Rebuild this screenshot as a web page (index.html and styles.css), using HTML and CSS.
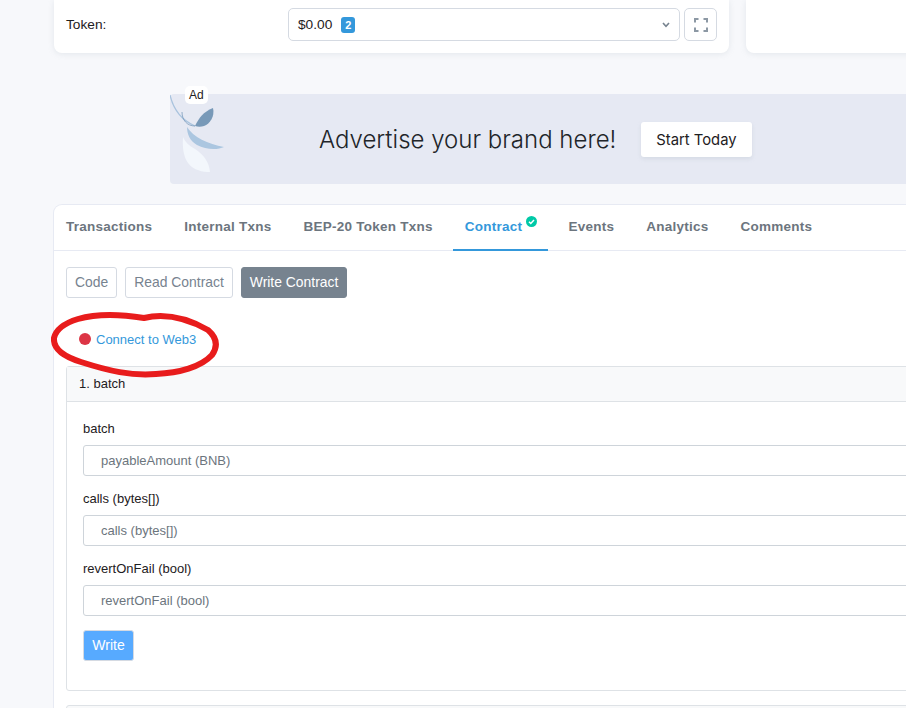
FILE: index.html
```html
<!DOCTYPE html>
<html lang="en">
<head>
    <meta charset="UTF-8">
    <meta name="viewport" content="width=device-width, initial-scale=1.0">
    <title>Write Contract</title>
    <link rel="stylesheet" href="styles.css">
</head>
<body>
    <div class="top-row">
        <div class="top-card">
            <span class="token-label">Token:</span>
            <div class="token-select">
                <span>$0.00</span>
                <span class="token-count">2</span>
                <svg class="caret" width="8" height="6" viewBox="0 0 8 6"><path d="M1 1l3 3.4L7 1" fill="none" stroke="#77838f" stroke-width="1.6"/></svg>
            </div>
            <div class="expand-btn">
                <svg width="14" height="14" viewBox="0 0 14 14"><path d="M1 4.500V1h3.500M9.500 1H13v3.500M13 9.500V13H9.500M4.500 13H1V9.500" fill="none" stroke="#8c98a4" stroke-width="2"/></svg>
            </div>
        </div>
        <div class="top-card side"></div>
    </div>

    <div class="ad">
        <span class="ad-tag">Ad</span>
        <svg class="ad-leaves" width="60" height="90" viewBox="0 0 60 90">
            <path d="M0 1C3 14 11 26 25 32" fill="none" stroke="#a9c3de" stroke-width="1.200"/>
            <path d="M12 18C12 26 17 32 25 32" fill="none" stroke="#7a9abb" stroke-width="0.800"/>
            <path d="M25 32C29 24 33 18 43 14C45 22 40 30 34 32C31 33 28 33 25 32Z" fill="#7899b8"/>
            <path d="M17 33C23 43 38 50 54 53C48 56 36 56 27 51C20 47 17 40 17 33Z" fill="#abc6e0"/>
            <path d="M13 43C12 58 15 72 28 76C32 78 37 78 40 78C39 68 34 61 25 55C19 52 15 48 13 43Z" fill="#f3f7fc"/>
        </svg>
        <span class="ad-text">Advertise your brand here!</span>
        <span class="ad-btn">Start Today</span>
    </div>

    <div class="card">
        <ul class="tabs">
            <li>Transactions</li>
            <li>Internal Txns</li>
            <li>BEP-20 Token Txns</li>
            <li class="active">Contract
                <svg class="check" width="11" height="11" viewBox="0 0 11 11"><circle cx="5.500" cy="5.500" r="5.500" fill="#00c9a7"/><path d="M3 5.700l1.800 1.800L8 4" fill="none" stroke="#fff" stroke-width="1.500"/></svg>
            </li>
            <li>Events</li>
            <li>Analytics</li>
            <li>Comments</li>
        </ul>
        <div class="card-body">
            <div class="sub-tabs">
                <span class="sub-btn">Code</span>
                <span class="sub-btn">Read Contract</span>
                <span class="sub-btn current">Write Contract</span>
            </div>
            <div class="connect">
                <span class="dot"></span>
                <a href="#">Connect to Web3</a>
                <svg class="scribble" width="180" height="76" viewBox="0 0 180 76">
                    <path d="M93 7C110 3 132 5 157 19C165 26 168 34 161 44C150 56 128 62 105 63C80 65 58 60 30 51C14 46 2 38 3 27C5 18 14 12 27 8C48 2 74 4 93 7Z" fill="none" stroke="#e81c1c" stroke-width="6" stroke-linecap="round"/>
                </svg>
            </div>
            <div class="panel">
                <div class="panel-head">1. batch</div>
                <div class="panel-body">
                    <label class="field-label">batch</label>
                    <input class="field" type="text" placeholder="payableAmount (BNB)">
                    <label class="field-label">calls (bytes[])</label>
                    <input class="field" type="text" placeholder="calls (bytes[])">
                    <label class="field-label">revertOnFail (bool)</label>
                    <input class="field" type="text" placeholder="revertOnFail (bool)">
                    <button class="write-btn">Write</button>
                </div>
            </div>
            <div class="panel next"></div>
        </div>
    </div>
</body>
</html>
```
FILE: styles.css
```css
*{
    margin: 0;
    padding: 0;
    box-sizing: border-box;
}
body{
    width: 906px;
    height: 708px;
    overflow: hidden;
    background-color: #f7f8fb;
    font-family: "Liberation Sans", Arial, sans-serif;
    font-size: 13px;
    color: #1e2022;
}
.top-row{
    display: flex;
    gap: 17px;
    margin-left: 54px;
    width: 1000px;
}
.top-card{
    display: flex;
    align-items: center;
    flex: none;
    width: 675px;
    height: 53px;
    padding: 8px 12px 12px 12px;
    font-size: 13.7px;
    background-color: white;
    border-radius: 0 0 8px 8px;
    box-shadow: 0 1px 6px #97a4af33;
}
.top-card.side{
    width: 300px;
}
.token-label{
    width: 222px;
}
.token-select{
    display: flex;
    align-items: center;
    width: 392px;
    height: 33px;
    padding: 0 9px;
    border: 1px solid #d5dae2;
    border-radius: 5px;
}
.token-count{
    margin-left: 9px;
    padding: 2px 4px;
    font-size: 11px;
    font-weight: bold;
    line-height: 12px;
    color: white;
    background-color: #3498db;
    border-radius: 3px;
}
.caret{
    margin-left: auto;
}
.expand-btn{
    display: flex;
    align-items: center;
    justify-content: center;
    width: 33px;
    height: 33px;
    margin-left: 4px;
    border: 1px solid #d5dae2;
    border-radius: 5px;
}
.ad{
    position: relative;
    display: flex;
    align-items: center;
    width: 900px;
    height: 90px;
    margin: 41px 0 0 170px;
    padding-left: 149px;
    background-color: #e6e9f3;
    border-radius: 4px;
}
.ad-tag{
    position: absolute;
    top: -8px;
    left: 15px;
    padding: 0 4px;
    height: 18px;
    font-size: 12px;
    line-height: 18px;
    background-color: white;
    border-radius: 5px;
}
.ad-leaves{
    position: absolute;
    top: 0;
    left: 0;
}
.ad-text{
    font-family: "Inter", sans-serif;
    font-size: 24px;
    font-weight: 300;
    color: #212529;
}
.ad-btn{
    margin-left: 25px;
    padding: 10px 15px 8px 15px;
    font-family: "Inter", sans-serif;
    font-size: 14.8px;
    line-height: 17px;
    background-color: white;
    border-radius: 3px;
    box-shadow: 0 2px 4px #97a4af33;
}
.card{
    width: 1000px;
    height: 600px;
    margin: 21px 0 0 54px;
    background-color: white;
    border-radius: 8px;
    box-shadow: 0 0 0 1px #e7eaf3;
}
.tabs{
    display: flex;
    height: 46px;
    list-style-type: none;
    border-bottom: 1px solid #e7eaf3;
}
.tabs > li{
    position: relative;
    padding: 14px 12px 0 12px;
    margin-right: 8px;
    font-size: 13.5px;
    font-weight: bold;
    letter-spacing: 0.25px;
    color: #6c757e;
    white-space: nowrap;
}
.tabs > li.active{
    height: 46px;
    padding-right: 26px;
    color: #3498db;
    border-bottom: 2px solid #3498db;
}
.check{
    position: absolute;
    top: 11px;
    right: 11px;
}
.card-body{
    padding: 16px 0 0 12px;
}
.sub-tabs{
    display: flex;
    gap: 8px;
}
.sub-btn{
    height: 31px;
    padding: 0 8px;
    font-size: 13.9px;
    line-height: 29px;
    color: #77838f;
    border: 1px solid #d5dae2;
    border-radius: 3px;
}
.sub-btn.current{
    color: white;
    background-color: #77838f;
    border-color: #77838f;
}
.connect{
    position: relative;
    display: flex;
    align-items: center;
    height: 68px;
    padding: 14px 0 0 13px;
    gap: 5px;
}
.connect a{
    color: #3498db;
    text-decoration: none;
}
.dot{
    width: 12px;
    height: 12px;
    background-color: #dc3545;
    border-radius: 50%;
}
.scribble{
    position: absolute;
    top: 13px;
    left: -15px;
}
.panel{
    width: 900px;
    height: 325px;
    border: 1px solid #dee2e6;
    border-radius: 3px;
}
.panel.next{
    height: 40px;
    margin-top: 14px;
    background-color: #f8f9fa;
}
.panel-head{
    height: 35px;
    padding: 0 12px;
    line-height: 33px;
    background-color: #f8f9fa;
    border-bottom: 1px solid #dee2e6;
}
.panel-body{
    display: flex;
    flex-direction: column;
    align-items: flex-start;
    padding: 19px 16px 0 16px;
}
.field-label{
    height: 16px;
    margin-bottom: 8px;
    line-height: 16px;
}
.field{
    width: 100%;
    height: 31px;
    margin-bottom: 15px;
    padding: 0 17px;
    font-family: inherit;
    font-size: 13px;
    border: 1px solid #ced4da;
    border-radius: 3px;
}
.field::placeholder{
    color: #6c757d;
    opacity: 1;
}
.write-btn{
    width: 51px;
    height: 31px;
    margin-top: -1px;
    padding-bottom: 1px;
    font-family: inherit;
    font-size: 14px;
    color: white;
    background-color: #57aaff;
    border: 1px solid #d5dae2;
    border-radius: 3px;
}
```
